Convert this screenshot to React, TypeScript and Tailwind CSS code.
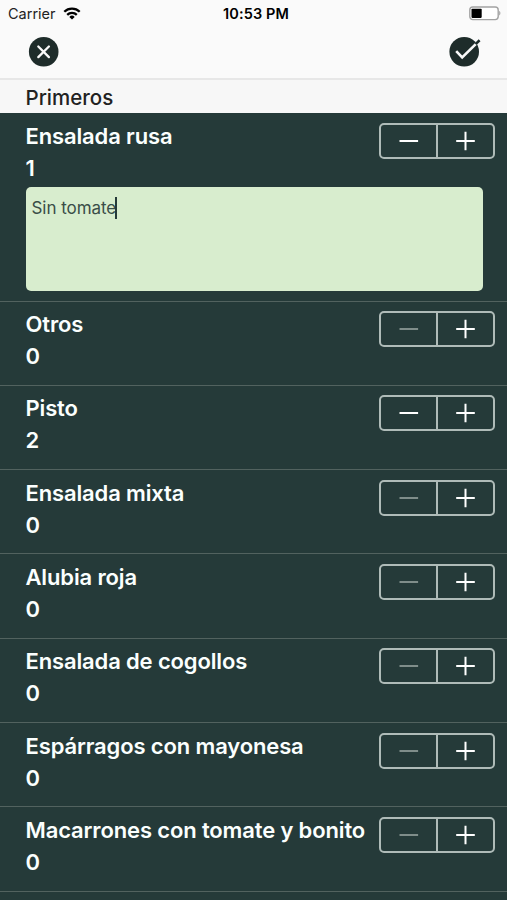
import React, { useState } from 'react'

interface Dish {
  name: string
  quantity: number
  notes?: string
}

const initialDishes: Dish[] = [
  { name: 'Ensalada rusa', quantity: 1, notes: 'Sin tomate' },
  { name: 'Otros', quantity: 0 },
  { name: 'Pisto', quantity: 2 },
  { name: 'Ensalada mixta', quantity: 0 },
  { name: 'Alubia roja', quantity: 0 },
  { name: 'Ensalada de cogollos', quantity: 0 },
  { name: 'Espárragos con mayonesa', quantity: 0 },
  { name: 'Macarrones con tomate y bonito', quantity: 0 },
]

const StatusBar: React.FC = () => (
  <div className="grid h-[27px] grid-cols-3 items-center pl-2 pr-[6px] text-black">
    <div className="flex items-center gap-[7px]">
      <span className="text-[14.5px] text-[#222]">Carrier</span>
      <svg className="h-[13px] w-[18px]" viewBox="0 0 18 13" fill="none" stroke="currentColor" strokeWidth="2.3">
        <path d="M1.3 4.8a11 11 0 0 1 15.4 0" />
        <path d="M4.2 7.9a6.9 6.9 0 0 1 9.6 0" />
        <path d="M9 12.5 6.3 9.9a3.9 3.9 0 0 1 5.4 0z" fill="currentColor" stroke="none" />
      </svg>
    </div>
    <span className="pl-[3px] text-center text-[14.5px] font-semibold tracking-[0.1px]">10:53 PM</span>
    <svg className="h-[15px] w-8 justify-self-end" viewBox="0 0 32 15">
      <rect x="0.8" y="1" width="28.4" height="12.6" rx="3" fill="#fff" stroke="#a3a3a3" strokeWidth="1.4" />
      <rect x="2.5" y="2.7" width="10.2" height="9.2" rx="0.8" fill="#000" />
      <path d="M30.2 5.1c1.6.5 1.6 3.9 0 4.4z" fill="#a3a3a3" />
    </svg>
  </div>
)

const Header: React.FC = () => (
  <div className="flex h-[51px] items-start justify-between pl-7 pr-6 pt-[9px]">
    <button aria-label="Cerrar">
      <svg className="h-8 w-8" viewBox="0 0 32 32">
        <circle cx="15.7" cy="15.7" r="14.8" fill="#1e2c2a" />
        <path d="m10.3 10.5 10.6 10.6M20.9 10.5 10.3 21.1" stroke="#f9f9f9" strokeWidth="2.3" strokeLinecap="round" />
      </svg>
    </button>
    <button aria-label="Confirmar">
      <svg className="h-8 w-[35px]" viewBox="0 0 35 32" fill="none">
        <circle cx="16.2" cy="15.7" r="14.8" fill="#1e2c2a" />
        <path d="m8.2 15.2 6 6.3L28.5 7.4" stroke="#f9f9f9" strokeWidth="2.6" />
        <path d="m27.6 8.1 4-3.8" stroke="#1e2c2a" strokeWidth="2.6" />
      </svg>
    </button>
  </div>
)

interface StepperProps {
  value: number
  onChange: (value: number) => void
}

const Stepper: React.FC<StepperProps> = ({ value, onChange }) => (
  <div className="mt-[9.6px] flex h-[36px] w-[116px] shrink-0 rounded-[5px] border-2 border-[#afbbb8] text-white">
    <button
      className="flex flex-1 items-center justify-center disabled:text-[#7f8d8a]"
      disabled={value === 0}
      onClick={() => onChange(value - 1)}
      aria-label="Menos"
    >
      <svg className="h-5 w-5" viewBox="0 0 20 20" stroke="currentColor" strokeWidth="2">
        <path d="M0.5 10h18.6" />
      </svg>
    </button>
    <button
      className="flex flex-1 items-center justify-center border-l-2 border-[#afbbb8]"
      onClick={() => onChange(value + 1)}
      aria-label="Más"
    >
      <svg className="h-5 w-5" viewBox="0 0 20 20" stroke="currentColor" strokeWidth="2">
        <path d="M0.2 10h18.6M9.5 0.7v18.6" />
      </svg>
    </button>
  </div>
)

interface DishRowProps {
  dish: Dish
  onQuantityChange: (value: number) => void
}

const DishRow: React.FC<DishRowProps> = ({ dish, onQuantityChange }) => (
  <div className="border-b border-[#52625f] pl-[25.5px]">
    <div className={dish.notes ? 'flex h-[74.4px] justify-between pr-3' : 'flex h-[83.3px] justify-between pr-3'}>
      <div className="whitespace-nowrap pt-[6.5px] text-[22px] font-semibold leading-8 tracking-[-0.14px] text-[#fbfffe]">
        <h3>{dish.name}</h3>
        <p>{dish.quantity}</p>
      </div>
      <Stepper value={dish.quantity} onChange={onQuantityChange} />
    </div>
    {dish.notes && (
      <div className="mb-[9.2px] flex h-[104px] w-[457px] items-start rounded-[5px] bg-[#d8edce] pl-[6px] pt-[9.4px]">
        <span className="text-[17px] leading-[22px] tracking-[-0.05px] text-[#3a4d48]">{dish.notes}</span>
        <span className="-ml-px h-[22px] w-[2px] bg-[#253a39]" />
      </div>
    )}
  </div>
)

const App: React.FC = () => {
  const [dishes, setDishes] = useState(initialDishes)

  const updateQuantity = (index: number, quantity: number) => {
    setDishes(dishes.map((dish, i) => (i === index ? { ...dish, quantity } : dish)))
  }

  return (
    <div className="h-[900px] w-[507px] overflow-hidden bg-[#253a39] font-['Inter',sans-serif]">
      <div className="bg-[#fafafa]">
        <StatusBar />
        <Header />
      </div>
      <div className="h-[35px] border-t-2 border-[#e7e7e7] bg-[#f7f7f7] pl-[25.5px] pt-[2px]">
        <h2 className="text-[20.5px] font-medium leading-8 text-[#222]">Primeros</h2>
      </div>
      {dishes.map((dish, index) => (
        <DishRow key={dish.name} dish={dish} onQuantityChange={(value) => updateQuantity(index, value)} />
      ))}
    </div>
  )
}

export default App
